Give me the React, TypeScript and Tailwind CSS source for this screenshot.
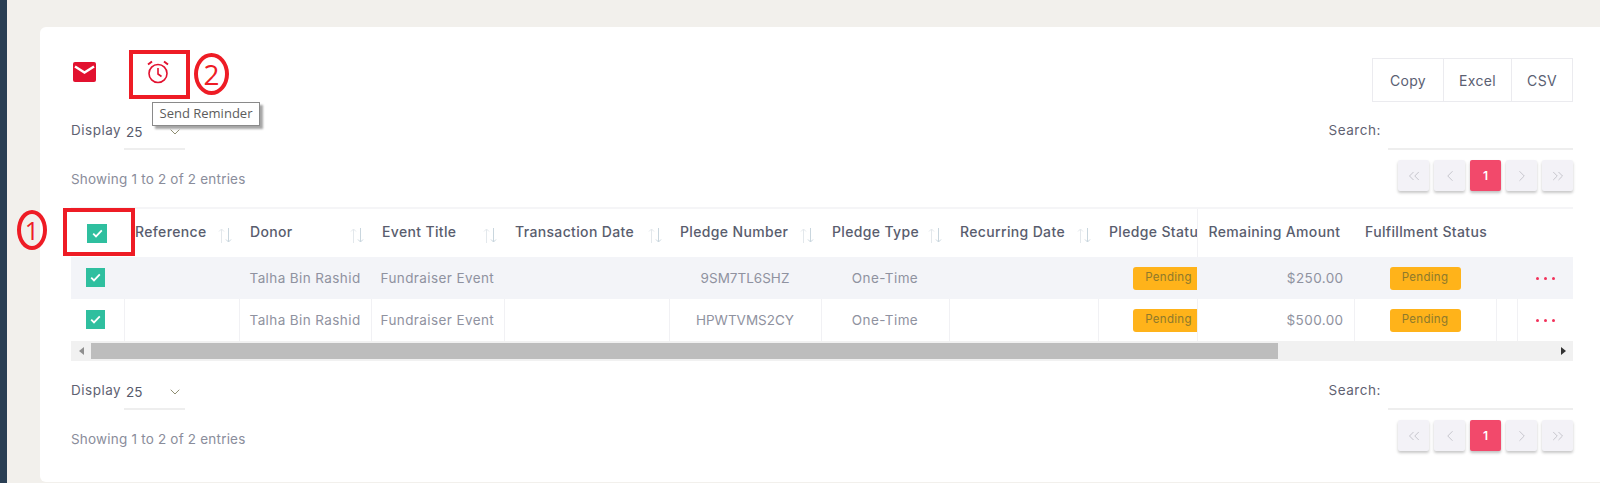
import { ChevronDown, ChevronLeft, ChevronRight, ChevronsLeft, ChevronsRight } from "lucide-react";

const SortIcon = () => (
  <svg width="14" height="15" viewBox="0 0 14 15" fill="none" className="mt-[8px] shrink-0">
    <path d="M3.5 15V1M1 3.5 3.5 1 6 3.5" stroke="#e3e8ec" strokeWidth="1" />
    <path d="M10.5 0v14M8 11.5l2.5 2.5 2.5-2.5" stroke="#c9d6de" strokeWidth="1" />
  </svg>
);

const Check = ({ header }: { header?: boolean }) => (
  <span className={`flex items-center justify-center bg-[#2fbf9f] ${header ? "h-[19px] w-[20px]" : "h-[19px] w-[19px]"}`}>
    <svg width="11" height="9" viewBox="0 0 11 9" fill="none">
      <path d="M1.2 4.6 4 7.4 9.8 1.4" stroke="#fff" strokeWidth="1.8" />
    </svg>
  </span>
);

const Pager = () => (
  <div className="mt-[10px] flex gap-[5px]">
    {[ChevronsLeft, ChevronLeft, null, ChevronRight, ChevronsRight].map((Icon, i) =>
      Icon ? (
        <span key={i} className="flex h-[31px] w-[31px] items-center justify-center rounded-[2px] bg-[#f3f2f7] text-[#bcbcc4] shadow-[0_2px_3px_rgba(0,0,0,0.22)]">
          <Icon size={18} strokeWidth={1.1} />
        </span>
      ) : (
        <span key={i} className="flex h-[31px] w-[31px] items-center justify-center rounded-[2px] bg-[#f2496b] text-[12px] font-semibold text-white shadow-[0_2px_3px_rgba(0,0,0,0.25)]">
          1
        </span>
      ),
    )}
  </div>
);

const Controls = ({ top }: { top?: boolean }) => (
  <div className={`flex justify-between ${top ? "" : "mt-[1px]"}`}>
    <div>
      <div className="flex h-[48px] items-end">
        <span className="mb-[10px] w-[53px] text-[13.5px] tracking-[0.5px] text-[#5f6272]">Display</span>
        <span className="flex h-[28px] w-[61px] items-start justify-between border-b-2 border-[#eeeeee] pl-[2px] pr-[2px] text-[13.5px] text-[#555a6b]">
          25
          <ChevronDown size={16} strokeWidth={1.2} className="mt-[2px] text-[#74724f]" />
        </span>
      </div>
      <p className="mt-[19px] text-[13.5px] tracking-[0.2px] text-[#8a8d9b]">Showing 1 to 2 of 2 entries</p>
    </div>
    <div className="flex flex-col items-end">
      <div className="flex h-[48px] items-end">
        <span className="mb-[10px] mr-[7px] text-[13.5px] tracking-[0.55px] text-[#5f6272]">Search:</span>
        <span className="w-[185px] border-b-2 border-[#eeeeee]" />
      </div>
      <Pager />
    </div>
  </div>
);

const headers: [string, boolean][] = [
  ["Reference", true],
  ["Donor", true],
  ["Event Title", true],
  ["Transaction Date", true],
  ["Pledge Number", true],
  ["Pledge Type", true],
  ["Recurring Date", true],
  ["Pledge Status", false],
  ["Remaining Amount", false],
  ["Fulfillment Status", false],
  ["", false],
  ["", false],
];

const Badge = ({ clip }: { clip?: boolean }) => (
  <span className={`flex h-[23px] items-center justify-center rounded-[3px] bg-[#ffb31a] text-[11.5px] tracking-[0.3px] text-[#8e7a2c] ${clip ? "w-[72px] shrink-0" : "w-[71px]"}`}>
    Pending
  </span>
);

const rows = [
  { num: "9SM7TL6SHZ", amt: "$250.00", bg: "bg-[#f3f4f8]", line: "border-[#f3f4f8]" },
  { num: "HPWTVMS2CY", amt: "$500.00", bg: "bg-white", line: "border-[#f1f1f4]" },
];

const td = "h-[42px] overflow-hidden border-r p-0 text-[13.5px] tracking-[0.4px] text-[#8f92a0]";

export default function App() {
  return (
    <div className="flex h-[483px] w-[1600px] overflow-hidden bg-[#f2f0ec] font-['Inter','Liberation_Sans',sans-serif]">
      <div className="w-[7px] shrink-0 bg-[#2a3f54]" />
      <main className="flex-1 pl-[33px] pt-[27px]">
        <div className="relative h-[455px] rounded-l-[6px] bg-white pl-[31px] pr-[27px] pt-[23px]">
          {/* toolbar */}
          <div className="flex h-[52px] items-start justify-between">
            <div className="flex items-start">
              <span className="mt-[12px] w-[58px] pl-[2px]">
                <svg width="23" height="20" viewBox="0 0 23 20">
                  <path fill="#e2112f" d="M2 0h19a2 2 0 0 1 2 2v16a2 2 0 0 1-2 2H2a2 2 0 0 1-2-2V2a2 2 0 0 1 2-2Z" />
                  <path fill="none" stroke="#fff" strokeWidth="2.4" d="M2 4.4 11.500 10.500 21 4.400" />
                </svg>
              </span>
              <span className="flex h-[49px] w-[61px] items-start justify-center border-[4px] border-[#ee1c25] pr-[3px] pt-[6px]">
                <svg width="24" height="24" viewBox="0 0 24 24" fill="none" stroke="#e2112f" strokeWidth="1.6">
                  <circle cx="12" cy="13.500" r="9" />
                  <path d="M12 8v6l3.500 2.500" />
                  <path d="M2 4.500 6 1.500M22 4.500l-4-3" strokeWidth="2" />
                </svg>
              </span>
              <span className="ml-[4px] mt-[3px] flex h-[42px] w-[35px] items-center justify-center rounded-[50%] border-[4px] border-[#ee1c25] font-['Open_Sans',sans-serif] text-[28px] leading-none text-[#ee1c25]">
                2
              </span>
            </div>
            <div className="mt-[8px] flex h-[44px] w-[201px] border border-[#ebebef] text-[14px] tracking-[0.3px] text-[#5a6072]">
              <span className="flex w-[71px] items-center justify-center border-r border-[#ebebef]">Copy</span>
              <span className="flex w-[68px] items-center justify-center border-r border-[#ebebef]">Excel</span>
              <span className="flex flex-1 items-center justify-center">CSV</span>
            </div>
          </div>

          {/* tooltip */}
          <div className="absolute left-[112px] top-[75px] z-10 flex h-[24px] w-[108px] items-center justify-center border border-[#8a8a8a] bg-white font-['Open_Sans',sans-serif] text-[13px] text-[#5c5c5c] shadow-[3px_3px_2px_rgba(0,0,0,0.35)]">
            Send Reminder
          </div>

          <Controls top />

          {/* table */}
          <div className="relative mt-[16px] w-[1502px] border-t-2 border-[#f5f5f7]">
            <table className="w-[1502px] table-fixed border-collapse">
              <colgroup>
                <col className="w-[53px]" />
                <col className="w-[115px]" />
                <col className="w-[132px]" />
                <col className="w-[133px]" />
                <col className="w-[165px]" />
                <col className="w-[152px]" />
                <col className="w-[128px]" />
                <col className="w-[149px]" />
                <col className="w-[99px]" />
                <col className="w-[157px]" />
                <col className="w-[142px]" />
                <col className="w-[21px]" />
                <col className="w-[56px]" />
              </colgroup>
              <thead>
                <tr className="h-[48px]">
                  <th className="p-0">
                    <span className="ml-[16px] block w-[20px]"><Check header /></span>
                  </th>
                  {headers.map(([h, sort], i) => (
                    <th
                      key={i}
                      className={`overflow-hidden whitespace-nowrap p-0 pl-[11px] text-left text-[14px] font-medium tracking-[0.35px] text-[#595d6e] ${h === "Pledge Status" ? "border-r border-[#f1f1f4] pl-[10px]" : ""}`}
                    >
                      <div className={`flex h-[24px] items-center justify-between pr-[7px] ${sort ? "" : ""} -mt-[4px]`}>
                        <span>{h}</span>
                        {sort && <SortIcon />}
                      </div>
                    </th>
                  ))}
                </tr>
              </thead>
              <tbody>
                {rows.map((r) => (
                  <tr key={r.num} className={r.bg}>
                    <td className={`${td} ${r.line}`}>
                      <span className="ml-[15px] -mt-[2px] block w-[19px]"><Check /></span>
                    </td>
                    <td className={`${td} ${r.line}`} />
                    <td className={`${td} ${r.line} whitespace-nowrap pl-[10px]`}>Talha Bin Rashid</td>
                    <td className={`${td} ${r.line} whitespace-nowrap pl-[9px]`}>Fundraiser Event</td>
                    <td className={`${td} ${r.line}`} />
                    <td className={`${td} ${r.line} text-center tracking-[0px]`}>{r.num}</td>
                    <td className={`${td} ${r.line} text-center`}>One-Time</td>
                    <td className={`${td} ${r.line}`} />
                    <td className={`${td} ${r.line}`}>
                      <div className="ml-[34px] flex"><Badge clip /></div>
                    </td>
                    <td className={`${td} ${r.line} pr-[10px] text-right`}>{r.amt}</td>
                    <td className={`${td} ${r.line}`}>
                      <div className="flex justify-center"><Badge /></div>
                    </td>
                    <td className={`${td} ${r.line}`} />
                    <td className={`${td} border-transparent text-center`}>
                      <span className="flex items-center justify-center gap-[5px]">
                        <i className="h-[3px] w-[3px] rounded-full bg-[#f2315a]" />
                        <i className="h-[3px] w-[3px] rounded-full bg-[#f2315a]" />
                        <i className="h-[3px] w-[3px] rounded-full bg-[#f2315a]" />
                      </span>
                    </td>
                  </tr>
                ))}
              </tbody>
            </table>
            {/* scrollbar */}
            <div className="flex h-[20px] items-center bg-[#f1f1f1]">
              <span className="flex w-[20px] justify-center">
                <svg width="5" height="8" viewBox="0 0 5 8"><path d="M5 0v8L0 4z" fill="#8f8f8f" /></svg>
              </span>
              <span className="h-[16px] w-[1187px] bg-[#bdbdbd]" />
              <span className="ml-auto flex w-[20px] justify-center">
                <svg width="5" height="8" viewBox="0 0 5 8"><path d="M0 0v8l5-4z" fill="#333" /></svg>
              </span>
            </div>
            {/* annotation 1 */}
            <div className="absolute left-[-8px] top-[-1px] h-[48px] w-[72px] border-[4px] border-[#ee1c25]" />
            <div className="absolute left-[-54px] top-[1px] flex h-[40px] w-[30px] items-center justify-center rounded-[50%] border-[4px] border-[#ee1c25] font-['Open_Sans',sans-serif] text-[25px] leading-none text-[#ee1c25]">
              1
            </div>
          </div>

          <Controls />
        </div>
      </main>
    </div>
  );
}
